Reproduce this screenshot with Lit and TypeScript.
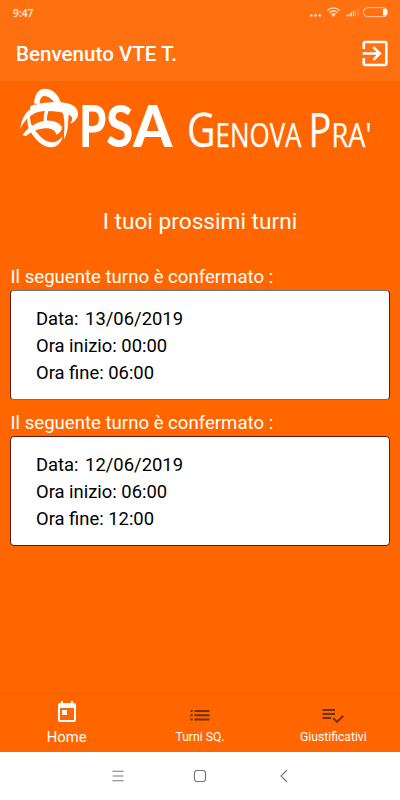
import { LitElement, html, css, svg } from "lit";
import { customElement, property } from "lit/decorators.js";

interface Shift { date: string; start: string; end: string; }

const shifts: Shift[] = [
  { date: "13/06/2019", start: "00:00", end: "06:00" },
  { date: "12/06/2019", start: "06:00", end: "12:00" },
];

@customElement("shift-card")
class ShiftCard extends LitElement {
  @property({ attribute: false }) shift!: Shift;
  static styles = css`
    :host { display: block; height: 146px; }
    .label { height: 26px; line-height: 26px; font-size: 18.6px; color: #fff; white-space: pre; padding-left: .5px; }
    .card { box-sizing: border-box; height: 110px; background: #fff; border: 1px solid #5c1a12; border-top-color: #68737a; border-bottom-color: #68737a; border-radius: 4px; padding: 14px 25px 0; color: #000; font-size: 18.4px; line-height: 27px; }
    :host(.last) .card { border-color: #5c1a12; }
    .gap { margin-left: 2px; }
  `;
  render() {
    return html`<div class="label"><span>Il seguente turno è confermato :</span></div>
      <div class="card">
        <div>Data: <span class="gap">${this.shift.date}</span></div>
        <div>Ora inizio: ${this.shift.start}</div>
        <div>Ora fine: ${this.shift.end}</div>
      </div>`;
  }
}

const globe = svg`<g fill="#fff" transform="translate(10 0) scale(.33333)">
  <path d="M72 70C74 42 86 26 104 26C128 27 145 42 153 69L133 67C124 55 112 47 102 48C93 50 89 59 89 74Z"/>
  <path d="M31 146C33 121 45 98 61 88C57 79 66 74 76 74C108 66 156 61 187 75C205 85 209 104 199 117C194 125 187 129 181 130C191 117 188 108 172 102C139 91 96 91 76 99C54 110 40 127 31 146Z"/>
  <path d="M61 88C60 102 58 112 62 126C65 139 70 149 80 157C93 174 106 184 123 187C137 188 149 181 158 168C155 187 142 202 122 202C92 198 75 176 62 155C54 143 50 128 54 106Z"/>
  <path d="M38 166C49 145 76 126 105 122C132 120 151 130 156 142C155 153 149 160 139 164C137 150 122 143 103 145C81 148 60 157 48 169Z"/>
  <path d="M105 92C101 104 100 112 102 124L111 123C110 112 112 102 116 92Z"/>
  <path d="M156 94L177 101C172 118 179 143 163 177C160 158 169 124 156 94Z"/>
</g>`;

@customElement("app-root")
class AppRoot extends LitElement {
  static styles = css`
    :host { display: flex; flex-direction: column; width: 400px; height: 800px; overflow: hidden; background: #ff6600; font-family: Roboto, sans-serif; color: #fff; }
    svg { display: block; flex: none; }
    .top { height: 81px; background: #ff7011; flex: none; }
    .status { height: 26px; box-sizing: border-box; padding: 0 11px 0 13px; display: flex; align-items: center; justify-content: space-between; font: 600 10.3px/26px "Noto Sans", sans-serif; color: #ffe6d8; }
    .status span { margin-top: -1px; }
    .bar { height: 55px; display: flex; align-items: center; justify-content: space-between; padding: 0 9px 0 16px; }
    .bar h1 { margin: 0; font-size: 20.6px; font-weight: 500; line-height: 26px; }
    .logo { height: 80px; flex: none; margin-top: -1px; }
    .psa { font-family: Lato, sans-serif; font-weight: 900; }
    .name { font-family: "Open Sans", sans-serif; stroke: #fff; stroke-width: .25px; }
    h2 { margin: 46px 0 0; height: 32px; line-height: 32px; text-align: center; font-size: 22.7px; font-weight: 400; flex: none; }
    main { flex: 1; padding: 26px 10px 0; min-height: 0; }
    .tabs { height: 59px; box-sizing: border-box; flex: none; border-top: 1px solid #f36302; display: grid; grid-template-columns: repeat(3, 1fr); }
    .tab { display: flex; flex-direction: column; align-items: center; font-size: 12.2px; line-height: 16px; color: #fff; padding-top: 10px; }
    .tab svg { color: #743100; margin-bottom: 1px; }
    .tab.active { font-size: 14.8px; padding-top: 6px; }
    .tab.active svg { color: #fff; margin-bottom: 5px; }
    .nav { height: 48px; background: #fff; flex: none; }
  `;
  render() {
    return html`
      <div class="top">
        <div class="status"><span>9:47</span>
          <svg width="80" height="26" viewBox="309 0 80 26">
            <g fill="#ffe6d8"><circle cx="311.4" cy="15.5" r="1.3"/><circle cx="315.6" cy="15.5" r="1.3"/><circle cx="319.8" cy="15.5" r="1.3"/><circle cx="333.5" cy="15.3" r="1.2"/>
            <path d="M346 15h1.4v1.2H346zM348.3 14h1.4v2.2h-1.4zM350.6 12.6h1.4v3.6h-1.4zM352.9 11h1.2v5.2h-1.2z"/><path opacity=".4" d="M355 10h1v6.2h-1zM357.5 8.6h1v7.6h-1z"/></g>
            <path fill="none" stroke="#ffe6d8" stroke-width="1.3" d="M327.3 10.6q6.2-5.3 12.4 0M329.4 12.6q4.1-3.4 8.2 0M331.4 14.4q2.1-1.6 4.2 0"/>
            <rect x="363.5" y="7.7" width="24" height="9" rx="4" fill="none" stroke="#ffd0b0"/><path d="M383 9h2q2 0 2 3.2t-2 3.2h-2z" fill="#fff"/>
          </svg>
        </div>
        <div class="bar"><h1>Benvenuto VTE T.</h1>
          <svg width="32" height="32" viewBox="0 0.5 32 32" fill="none" stroke="#fff" stroke-width="2.6"><path d="M4.8 11.5V6q0-1.5 1.5-1.5h19.5q1.5 0 1.5 1.5v20q0 1.5-1.5 1.5H6.3q-1.5 0-1.5-1.5v-5.5M3.6 16H20M14.4 9.7l6.3 6.3-6.3 6.3"/></svg>
        </div>
      </div>
      <svg class="logo" width="400" height="80" viewBox="0 0 400 80" fill="#fff">
        ${globe}
        <text class="psa" y="67" font-size="57.5"><tspan x="79.3" textLength="27" lengthAdjust="spacingAndGlyphs">P</tspan><tspan x="106.3" textLength="27" lengthAdjust="spacingAndGlyphs">S</tspan><tspan x="133.3" textLength="39" lengthAdjust="spacingAndGlyphs">A</tspan></text>
        <text class="name" y="67.3" font-size="47.5"><tspan x="187" textLength="28.5" lengthAdjust="spacingAndGlyphs">G</tspan><tspan x="215.5" font-size="32" textLength="86" lengthAdjust="spacingAndGlyphs">ENOVA</tspan><tspan x="308.5" textLength="22.8" lengthAdjust="spacingAndGlyphs">P</tspan><tspan x="331.5" font-size="32" textLength="40" lengthAdjust="spacingAndGlyphs">RA'</tspan></text>
      </svg>
      <h2>I tuoi prossimi turni</h2>
      <main>${shifts.map((s, i) => html`<shift-card class=${i === shifts.length - 1 ? "last" : ""} .shift=${s}></shift-card>`)}</main>
      <div class="tabs">
        <div class="tab active"><svg width="24" height="24" viewBox="0 0 24 24" fill="currentColor"><path d="M19 3h-1V1h-2v2H8V1H6v2H5a2 2 0 0 0-2 2v15a2 2 0 0 0 2 2h14a2 2 0 0 0 2-2V5a2 2 0 0 0-2-2zm0 17H5V8h14zM7 10h5v5H7z"/></svg>Home</div>
        <div class="tab"><svg width="24" height="24" viewBox="0 0 24 24" fill="currentColor"><path d="M2.5 6h2.2v2H2.5zm0 4.2h2.2v2H2.5zm0 4.3h2.2v2H2.5zM6.5 6h15v2h-15zm0 4.2h15v2h-15zm0 4.3h15v2h-15z"/></svg>Turni SQ.</div>
        <div class="tab"><svg width="24" height="24" viewBox="0 0 24 24" fill="currentColor"><path d="M1.5 5h12.5v2H1.5zm0 4h12.5v2H1.5zm0 4h8.5v2H1.5zm20-2L23 12.5l-7 6.8-4.5-4.5L13 13.4l3 3z"/></svg>Giustificativi</div>
      </div>
      <div class="nav"><svg width="400" height="48" fill="none" stroke="#777" stroke-width="1.1"><path d="M112.5 19.3h11M112.5 24h11M112.5 28.7h11M287 18l-6 6 6 6"/><rect x="194.5" y="18.5" width="11" height="11" rx="2.5"/></svg></div>`;
  }
}
